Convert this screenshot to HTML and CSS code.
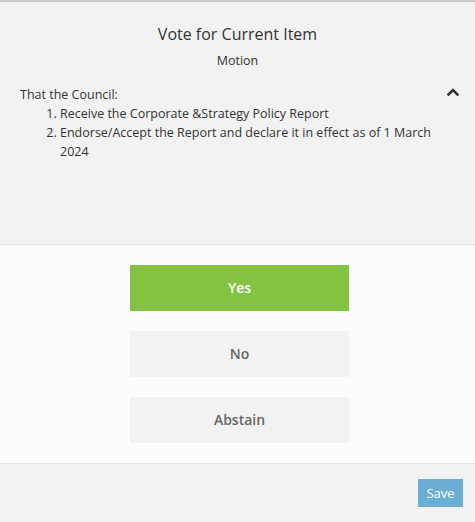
FILE: index.html
```html
<!DOCTYPE html>
<html>
<head>
<meta charset="utf-8">
<link rel="stylesheet" href="styles.css">
</head>
<body>
<div class="dialog">
  <div class="header">
    <h1 class="title">Vote for Current Item</h1>
    <div class="subtitle">Motion</div>
    <div class="motion">
      <div class="motion-text">
        <div>That the Council:</div>
        <ol class="motion-list">
          <li>Receive the Corporate &amp;Strategy Policy Report</li>
          <li>Endorse/Accept the Report and declare it in effect as of 1 March 2024</li>
        </ol>
      </div>
      <svg class="chevron" width="12" height="8" viewBox="0 0 12 8"><polyline points="1.5,6.5 6,2 10.5,6.5" fill="none" stroke="#333" stroke-width="2.6" stroke-linecap="square"/></svg>
    </div>
  </div>
  <div class="choices">
    <button class="choice choice-yes">Yes</button>
    <button class="choice">No</button>
    <button class="choice">Abstain</button>
  </div>
  <div class="footer">
    <button class="save">Save</button>
  </div>
</div>
</body>
</html>
```
FILE: styles.css
```css
html, body {
  margin: 0;
  padding: 0;
}
body {
  font-family: "Open Sans", "Liberation Sans", sans-serif;
  color: #333;
  background: #f2f2f2;
}
.dialog {
  width: 475px;
  height: 522px;
  display: flex;
  flex-direction: column;
}
.header {
  box-sizing: border-box;
  height: 245px;
  background: #f2f2f2;
  border-top: 2px solid #c9c9c9;
  border-bottom: 1px solid #e2e2e2;
  padding: 20px 0 0 20px;
}
.title {
  margin: 0;
  font-size: 16px;
  font-weight: 400;
  line-height: 24px;
  text-align: center;
  padding-right: 20px;
}
.subtitle {
  margin-top: 6px;
  font-size: 12.5px;
  line-height: 18px;
  text-align: center;
  padding-right: 20px;
}
.motion {
  display: flex;
  margin-top: 15px;
  font-size: 12.5px;
  line-height: 19px;
}
.motion-text {
  flex: 1;
  padding-right: 4px;
}
.motion-list {
  margin: 0;
  padding-left: 40px;
}
.chevron {
  margin: 3px 16px 0 0;
}
.choices {
  flex: 1;
  background: #fcfcfc;
  border-bottom: 1px solid #e2e2e2;
  padding: 20px 0 20px 4px;
  display: flex;
  flex-direction: column;
  align-items: center;
  gap: 20px;
}
.choice {
  width: 219px;
  height: 46px;
  border: none;
  background: #f2f2f2;
  color: #666;
  font-family: "Open Sans", "Liberation Sans", sans-serif;
  font-weight: 600;
  font-size: 14px;
  padding: 0 0 2px 0;
}
.choice-yes {
  background: #84c242;
  color: #fff;
}
.footer {
  height: 58px;
  box-sizing: border-box;
  background: #f2f2f2;
  padding: 15px 12px 0 0;
  display: flex;
  justify-content: flex-end;
  align-items: flex-start;
}
.save {
  width: 45px;
  height: 28px;
  border: none;
  background: #6aaed3;
  color: #fff;
  font-family: "Open Sans", "Liberation Sans", sans-serif;
  font-size: 13px;
  padding: 0;
}
```
